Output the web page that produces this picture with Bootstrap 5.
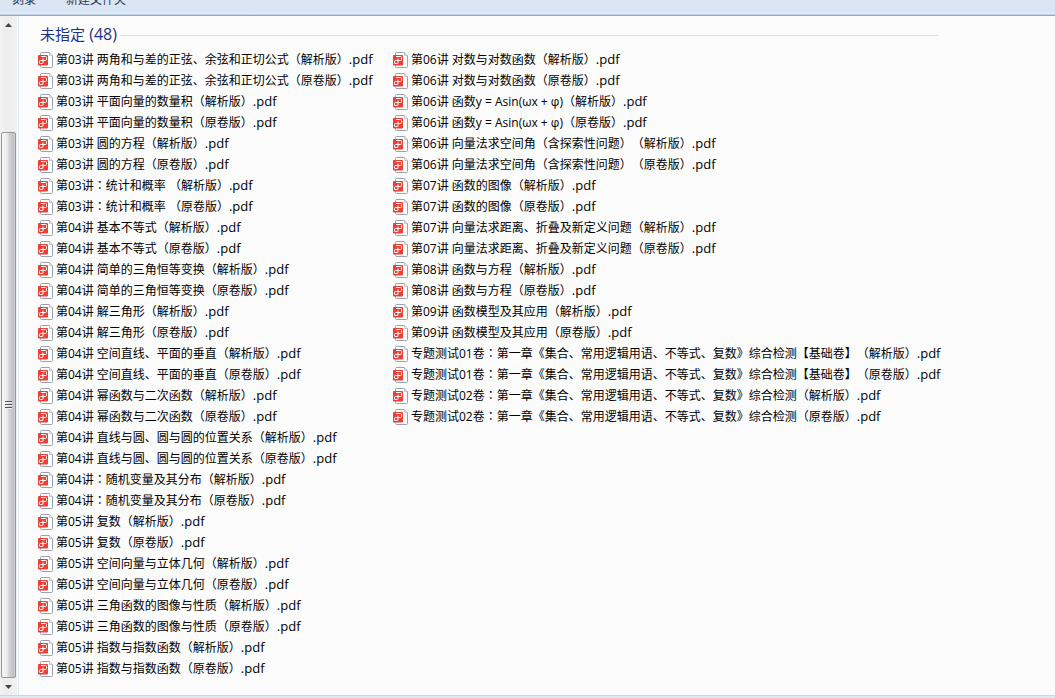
<!DOCTYPE html>
<html lang="zh-CN">
<head>
<meta charset="utf-8">
<meta name="viewport" content="width=device-width, initial-scale=1">
<title>文件列表</title>
<link href="https://cdn.jsdelivr.net/npm/bootstrap@5.3.0/dist/css/bootstrap.min.css" rel="stylesheet">
<style>
  body { font-family: "Open Sans", "Noto Sans CJK SC", sans-serif; font-size: 12px; line-height: 20px; background: #fcfcfc; color: #000; font-kerning: none; }
  .tool-bar { height: 16px; padding: 0 0 8px 12px; gap: 30px; background: linear-gradient(#dde5f4, #d9e6f5 13px, #e3eef9 13px, #e3eef9 14px, #c3d3e6 14px, #c3d3e6 15px, #97a9c3 15px); }
  .tool-bar button { line-height: 16px; color: #1e395b; }
  .scroll-rail { width: 19px; flex: none; background: linear-gradient(90deg, #f3f3f3, #ececec 6px, #f2f2f2 17px, #fcfcfc 17px, #fcfcfc 18px, #d9e8f6 18px); }
  .scroll-rail button { width: 17px; height: 17px; }
  .rail-gap { flex: 99 0 0; }
  .thumb { flex: 545 0 0; width: 15px; margin-left: 1px; border: 1px solid #979797; border-radius: 2px; background: linear-gradient(90deg, #f8f8f8, #ececec 5px, #d3d3d7 7px, #bfc0c4 12px, #dcdcdc); }
  .files { padding: 7px 0 15px 19px; }
  .group-head { max-width: 898px; gap: 4px; color: #1e3287; font-size: 15px; line-height: 22px; margin: 0 0 4px 2px; font-weight: 400; }
  .group-head hr { margin: 2px 0 0; color: #dedede; opacity: 1; }
  .count { font-size: 16px; }
  .file-grid { display: grid; grid-template-rows: repeat(30, 21px); grid-auto-flow: column; grid-template-columns: 355px auto; justify-content: start; }
  .file-grid a { color: #000; gap: 3px; white-space: pre; }
  .file-grid svg { flex: none; }
  .mid { font-family: "Noto Sans CJK TC", sans-serif; }
  .edition { display: inline-block; }
  .ext { font-size: 13px; }
  .bottom-edge { height: 3px; background: linear-gradient(#c9d6e6 1px, #dfe8f4 1px); }
</style>
</head>
<body class="d-flex flex-column min-vh-100">
<header class="tool-bar d-flex align-items-end overflow-hidden">
  <button type="button" class="border-0 bg-transparent p-0">刻录</button>
  <button type="button" class="border-0 bg-transparent p-0">新建文件夹</button>
</header>
<main class="d-flex flex-grow-1">
  <div class="scroll-rail d-flex flex-column">
    <button type="button" class="d-flex border-0 bg-transparent p-0 align-items-center justify-content-center" aria-label="向上滚动"><svg width="7" height="4"><path d="M3.5 0 7 4H0z" fill="#444"/></svg></button>
    <div class="rail-gap"></div>
    <div class="thumb d-flex align-items-center justify-content-center"><svg width="7" height="9"><path d="M0 1.5h7M0 4.5h7M0 7.5h7" stroke="#555"/><path d="M0 2.5h7M0 5.5h7M0 8.5h7" stroke="#eee"/></svg></div>
    <button type="button" class="d-flex border-0 bg-transparent p-0 align-items-center justify-content-center" aria-label="向下滚动"><svg width="7" height="4"><path d="M0 0h7L3.5 4z" fill="#444"/></svg></button>
  </div>
  <section class="files flex-grow-1">
    <h1 class="group-head d-flex align-items-center"><span>未指定<span class="count"> (48)</span></span><hr class="flex-grow-1"></h1>
    <ul class="file-grid list-unstyled m-0" id="files"></ul>
  </section>
</main>
<footer class="bottom-edge"></footer>
<svg class="d-none">
  <symbol id="pdf" viewBox="0 0 16 16">
    <path d="M3.5.5h8l3 3v11q0 1-1 1h-10q-1 0-1-1v-13q0-1 1-1z" fill="#fff" stroke="#9aa1b3"/>
    <path d="M11.5.5v3h3" fill="#eef0f5" stroke="#c0c5d0"/>
    <rect y="3" width="10" height="10.5" rx="1" fill="#ec3f35"/>
    <path d="M3 4.5h4.5q1 0 1 1v2q0 1-1 1H2.500q-1 0-1 1v1.500q0 .500.500.500h2.500q.500 0 .500-.500V6.500" fill="none" stroke="#fff"/>
  </symbol>
</svg>
<script src="https://cdn.jsdelivr.net/npm/bootstrap@5.3.0/dist/js/bootstrap.bundle.min.js"></script>
<script>
  // Each lesson comes as two files: the answer edition and the original paper.
  const lessons = [
    '第03讲 两角和与差的正弦、余弦和正切公式', '第03讲 平面向量的数量积', '第03讲 圆的方程', '第03讲：统计和概率 ',
    '第04讲 基本不等式', '第04讲 简单的三角恒等变换', '第04讲 解三角形', '第04讲 空间直线、平面的垂直',
    '第04讲 幂函数与二次函数', '第04讲 直线与圆、圆与圆的位置关系', '第04讲：随机变量及其分布',
    '第05讲 复数', '第05讲 空间向量与立体几何', '第05讲 三角函数的图像与性质', '第05讲 指数与指数函数',
    '第06讲 对数与对数函数', '第06讲 函数y = Asin(ωx + φ)', '第06讲 向量法求空间角（含探索性问题）',
    '第07讲 函数的图像', '第07讲 向量法求距离、折叠及新定义问题', '第08讲 函数与方程', '第09讲 函数模型及其应用',
    '专题测试01卷：第一章《集合、常用逻辑用语、不等式、复数》综合检测【基础卷】',
    '专题测试02卷：第一章《集合、常用逻辑用语、不等式、复数》综合检测'
  ];
  // Colons sit in the middle of their cell.
  const centre = s => s.replace(/：/g, '<span class="mid" lang="zh-TW">$&</span>');
  document.getElementById('files').innerHTML = lessons.flatMap(l => ['解析版', '原卷版'].map(v =>
    `<li><a href="#" class="d-flex align-items-center text-decoration-none"><svg width="15" height="16"><use href="#pdf" width="16" height="16"/></svg><span>${centre(l)}<span class="edition">（${v}）</span><span class="ext">.pdf</span></span></a></li>`)).join('');
</script>
</body>
</html>
